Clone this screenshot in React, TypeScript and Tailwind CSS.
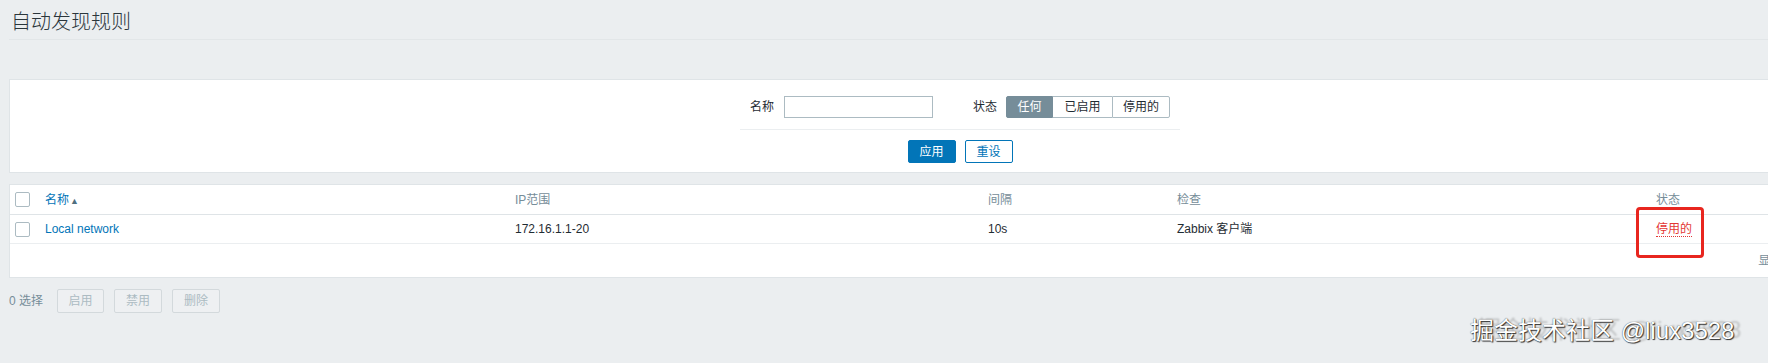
import React from "react";

function Checkbox() {
  return <span className="block w-[15px] h-[15px] bg-white border border-[#acbbc2] rounded-[2px]" />;
}

export default function App() {
  return (
    <div className="relative w-[1768px] h-[363px] overflow-hidden bg-[#ebeef0] text-[12px] text-[#1f2c33] font-['Liberation_Sans','Noto_Sans_CJK_SC',sans-serif]">
      <div className="w-[1911px] pl-[9px]">
        {/* Title */}
        <div className="h-[40px] pt-[4px] flex items-center border-b border-[#e2e6e8]">
          <h1 className="pl-[2px] text-[20px] leading-none font-light text-[#2a353b]">自动发现规则</h1>
        </div>

        {/* Filter */}
        <div className="mt-[39px] bg-white border border-[#dfe4e7] pt-[16px] pb-[9px]">
          <div className="flex justify-center items-center h-[22px]">
            <span className="mr-[10px]">名称</span>
            <span className="block w-[149px] h-[22px] border border-[#acbbc2] bg-white" />
            <span className="ml-[40px] mr-[9px]">状态</span>
            <div className="flex h-[22px]">
              <span className="flex items-center justify-center w-[47px] bg-[#768d99] text-white border border-[#768d99] rounded-l-[2px]">任何</span>
              <span className="flex items-center justify-center w-[59px] border-y border-[#acbbc2] bg-white">已启用</span>
              <span className="flex items-center justify-center w-[58px] border border-[#acbbc2] bg-white rounded-r-[2px]">停用的</span>
            </div>
          </div>
          <div className="mx-auto mt-[11px] w-[440px] border-t border-[#ebeef0]" />
          <div className="mt-[10px] flex justify-center gap-[9px]">
            <span className="flex items-center justify-center w-[48px] h-[23px] bg-[#0275b8] border border-[#0275b8] text-white rounded-[2px]">应用</span>
            <span className="flex items-center justify-center w-[48px] h-[23px] bg-white border border-[#0275b8] text-[#0275b8] rounded-[2px]">重设</span>
          </div>
        </div>

        {/* Table */}
        <div className="mt-[11px] bg-white border border-[#dfe4e7]">
          <div className="flex items-center h-[30px] border-b border-[#dfe4e7] text-[#768d99]">
            <div className="w-[35px] pl-[5px]"><Checkbox /></div>
            <div className="w-[470px] text-[#0275b8]">名称<span className="ml-[1px] text-[9px] text-[#4f6f80]">▲</span></div>
            <div className="w-[473px]">IP范围</div>
            <div className="w-[189px]">间隔</div>
            <div className="w-[479px]">检查</div>
            <div>状态</div>
          </div>
          <div className="flex items-center h-[29px] border-b border-[#ebeef0]">
            <div className="w-[35px] pl-[5px]"><Checkbox /></div>
            <div className="w-[470px] text-[#0275b8]">Local network</div>
            <div className="w-[473px]">172.16.1.1-20</div>
            <div className="w-[189px]">10s</div>
            <div className="w-[479px]">Zabbix 客户端</div>
            <div className="relative">
              <span className="text-[#e33734] border-b border-dotted border-[#e33734]">停用的</span>
              <span className="absolute left-[-20px] top-[-13px] w-[68px] h-[51px] border-[3px] border-[#e8261f] rounded-[4px]" />
            </div>
          </div>
          <div className="h-[33px] flex items-center justify-end pr-[5px] text-[#768d99]">显示 已自动发现的 1 中的 1</div>
        </div>

        {/* Footer */}
        <div className="mt-[11px] flex items-center h-[24px]">
          <span className="text-[#768d99] mr-[14px]">0 选择</span>
          <div className="flex gap-[10px]">
            <span className="flex items-center justify-center w-[47px] h-[24px] border border-[#d3d9dc] bg-[#eef0f2] text-[#acbbc2] rounded-[2px]">启用</span>
            <span className="flex items-center justify-center w-[48px] h-[24px] border border-[#d3d9dc] bg-[#eef0f2] text-[#acbbc2] rounded-[2px]">禁用</span>
            <span className="flex items-center justify-center w-[48px] h-[24px] border border-[#d3d9dc] bg-[#eef0f2] text-[#acbbc2] rounded-[2px]">删除</span>
          </div>
        </div>
      </div>

      {/* Watermark */}
      <div className="absolute left-[1470px] top-[319px] text-[24px] leading-none text-white whitespace-nowrap [text-shadow:0_0_1px_#222,1px_1px_1px_#333,7px_-1px_2px_rgba(0,0,0,0.18)]">
        掘金技术社区 @liux3528
      </div>
    </div>
  );
}
